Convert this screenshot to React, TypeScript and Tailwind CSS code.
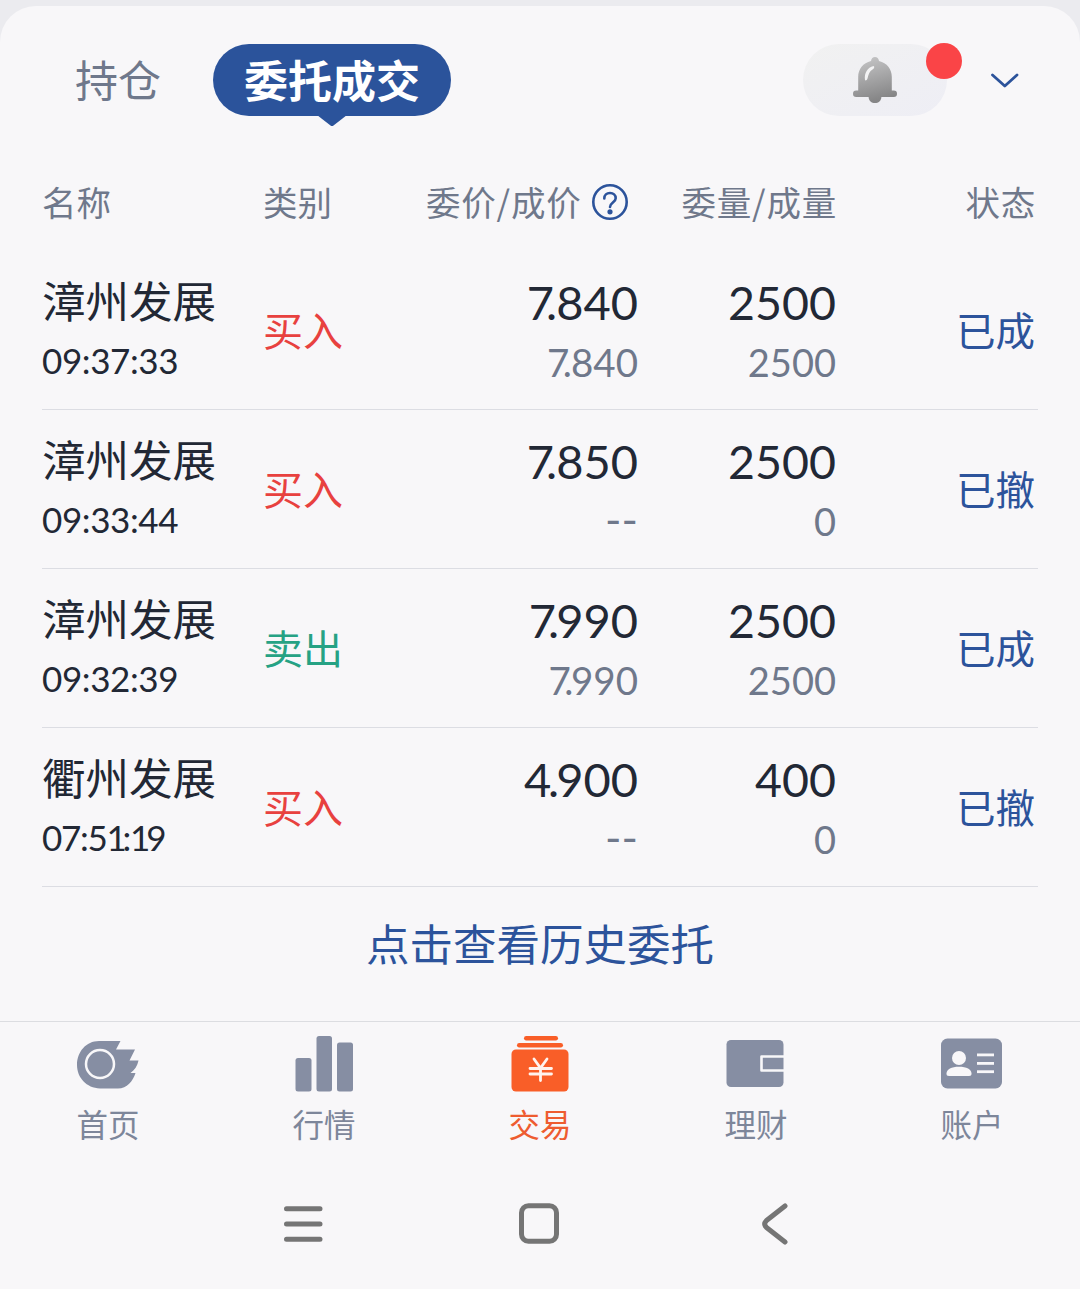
import React from 'react';

type Order = {
  name: string;
  time: string;
  side: '买入' | '卖出';
  price: string;
  dealPrice: string;
  qty: string;
  dealQty: string;
  status: string;
};

const orders: Order[] = [
  { name: '漳州发展', time: '09:37:33', side: '买入', price: '7.840', dealPrice: '7.840', qty: '2500', dealQty: '2500', status: '已成' },
  { name: '漳州发展', time: '09:33:44', side: '买入', price: '7.850', dealPrice: '--', qty: '2500', dealQty: '0', status: '已撤' },
  { name: '漳州发展', time: '09:32:39', side: '卖出', price: '7.990', dealPrice: '7.990', qty: '2500', dealQty: '2500', status: '已成' },
  { name: '衢州发展', time: '07:51:19', side: '买入', price: '4.900', dealPrice: '--', qty: '400', dealQty: '0', status: '已撤' },
];

// Decimal number with the point kerned against its neighbours.
function Price({ value }: { value: string }) {
  if (!value.includes('.')) {
    return <span className="text-[1.15em] leading-none">{value}</span>;
  }
  const [whole, frac] = value.split('.');
  const before = whole.endsWith('7') ? 'tracking-[-0.17em]' : 'tracking-[-0.07em]';
  const after = frac.startsWith('9') ? 'tracking-[-0.06em]' : 'tracking-[-0.02em]';
  return (
    <>
      <span className={before}>{whole}</span>
      <span className={after}>.</span>
      {frac}
    </>
  );
}

// Clock time with the ones set narrower than the other digits.
function Time({ value }: { value: string }) {
  return (
    <>
      {value.split(/(1)/).map((part, i) => (
        <span key={i} className={part === '1' ? 'tracking-[-0.12em]' : value.includes('1') ? 'tracking-[-1.3px]' : 'tracking-[-0.4px]'}>
          {part}
        </span>
      ))}
    </>
  );
}

function BellIcon() {
  return (
    <svg width="44" height="48" viewBox="0 0 44 48">
      <defs>
        <linearGradient id="bell" x1="0" y1="0" x2="0.25" y2="1">
          <stop offset="0" stopColor="#c9c9ca" />
          <stop offset="1" stopColor="#868687" />
        </linearGradient>
      </defs>
      <path
        d="M22 1c2.200 0 3.600 1.600 4 4C34 7 38.800 13 38.800 21v13.500h2a3.200 3.200 0 0 1 0 6.400H28.400C28.200 44.800 25.500 47 22 47s-6.200-2.200-6.400-6.100H3.200a3.200 3.200 0 0 1 0-6.400h2V21C5.200 13 10 7 18 5c.4-2.400 1.800-4 4-4Z"
        fill="url(#bell)"
      />
      <path d="M12 24c-1-7 2.500-12.500 8.500-14 1.500 1 .5 2.500-1 3.500-3 2-4 4.500-5 9-.4 1.800-2.200 2.500-2.500 1.500Z" fill="#f3f3f4" />
    </svg>
  );
}

function HomeIcon() {
  return (
    <svg width="62" height="56" viewBox="0 0 62 56">
      <path
        d="M22 5H43.500L39 13.500H58L52.500 24.500H61.500C60.500 30 57.500 34 53.500 37H58.500C56 45 50 52.500 41 52.500H23C9.500 52 0 41.500 0 29 0 16 9 5 22 5Z"
        fill="#868ea3"
      />
      <circle cx="23" cy="28" r="14" fill="none" stroke="#f8f7f9" strokeWidth="2.500" />
    </svg>
  );
}

function MarketIcon() {
  return (
    <svg width="62" height="56" viewBox="0 0 62 56" fill="#868ea3">
      <rect x="2.500" y="22" width="16" height="33.500" rx="2.500" />
      <rect x="23.500" y="0" width="15.500" height="55.500" rx="2.500" />
      <rect x="44" y="6.500" width="16" height="49" rx="2.500" />
    </svg>
  );
}

function TradeIcon() {
  return (
    <svg width="62" height="56" viewBox="0 0 62 56">
      <g fill="#f95e28">
        <rect x="15" y="0" width="34" height="4.500" rx="2.200" />
        <rect x="8" y="7" width="46" height="4.500" rx="2.200" />
        <rect x="2.500" y="13.500" width="57" height="42" rx="4.500" />
      </g>
      <path d="M25 23l6.500 9 6.500-9M21 32.500h21.500M21 38h21.500M31.500 32V44.500" fill="none" stroke="#fff3ee" strokeWidth="2.800" strokeLinecap="round" />
    </svg>
  );
}

function WalletIcon() {
  return (
    <svg width="62" height="56" viewBox="0 0 62 56">
      <rect x="1.500" y="4" width="57" height="47" rx="4.500" fill="#868ea3" />
      <path d="M59 20.500H36.500V34.500H59" fill="none" stroke="#f8f7f9" strokeWidth="2.600" strokeLinejoin="round" />
    </svg>
  );
}

function AccountIcon() {
  return (
    <svg width="62" height="56" viewBox="0 0 62 56">
      <rect x="0" y="2.500" width="61" height="50" rx="6.500" fill="#868ea3" />
      <g fill="#f8f7f9">
        <circle cx="18" cy="22" r="7" />
        <path d="M5.500 37.500C5.500 33.500 10.500 30.800 18 30.800S30.500 33.500 30.500 37.500C30.500 39.300 29.800 40 28 40H8C6.200 40 5.500 39.300 5.500 37.500Z" />
        <rect x="36" y="17.500" width="17" height="2.800" />
        <rect x="36" y="26" width="17" height="2.800" />
        <rect x="36" y="34.300" width="17" height="2.800" />
      </g>
    </svg>
  );
}

const tabs = [
  { label: '首页', Icon: HomeIcon, active: false },
  { label: '行情', Icon: MarketIcon, active: false },
  { label: '交易', Icon: TradeIcon, active: true },
  { label: '理财', Icon: WalletIcon, active: false },
  { label: '账户', Icon: AccountIcon, active: false },
];

function OrderRow({ o }: { o: Order }) {
  return (
    <div className="flex h-[159px] border-b border-[#dcdde3]">
      <div className="w-[221px] pt-[24px]">
        <div className="text-[43.5px] leading-[50px] text-[#222835]">{o.name}</div>
        <div className="mt-[10px] font-[Lato] text-[35px] leading-[50px] text-[#222835]">
          <Time value={o.time} />
        </div>
      </div>
      <div className={`w-[120px] pt-[53px] text-[40px] leading-[50px] ${o.side === '买入' ? 'text-[#e8413f]' : 'text-[#26a284]'}`}>{o.side}</div>
      <div className="w-[255px] pt-[26px] text-right font-[Lato]">
        <div className="h-[50px] text-[47px] leading-[50px] text-[#222835]">
          <Price value={o.price} />
        </div>
        <div className="mt-[10px] h-[50px] text-[38.5px] leading-[50px] text-[#6f788b]">
          <Price value={o.dealPrice} />
        </div>
      </div>
      <div className="w-[198px] pt-[26px] text-right font-[Lato]">
        <div className="text-[46.5px] leading-[50px] text-[#222835]">{o.qty}</div>
        <div className="mt-[10px] text-[38px] leading-[50px] text-[#6f788b]">{o.dealQty}</div>
      </div>
      <div className="flex-1 pt-[53px] pr-[3px] text-right text-[39.5px] leading-[50px] text-[#2c539b]">{o.status}</div>
    </div>
  );
}

export default function App() {
  return (
    <div className="h-[1289px] w-[1080px] overflow-hidden bg-[#ebebef] pt-[6px] font-['Noto_Sans_CJK_SC',sans-serif] whitespace-nowrap">
      <div className="flex h-[1283px] flex-col rounded-t-[36px] bg-[#f8f7f9]">
        <header className="flex h-[144px] items-start pt-[38px]">
          <div className="ml-[75px] w-[138px] text-[43px] leading-[69px] text-[#6f788b]">持仓</div>
          <div className="relative h-[72px] w-[238px] rounded-full bg-[#2b539b] text-center text-[44px] leading-[70px] font-bold text-white">
            委托成交
            <svg className="absolute top-[71px] left-[104px]" width="30" height="12" viewBox="0 0 30 12">
              <path d="M0 0H30L16.500 10.500Q15 11.500 13.500 10.500Z" fill="#2b539b" />
            </svg>
          </div>
          <div className="relative ml-[352px] flex h-[72px] w-[144px] items-center justify-center rounded-full bg-gradient-to-br from-[#f1f1f1] to-[#eeeef5]">
            <BellIcon />
            <span className="absolute top-[-1px] right-[-15px] size-[36px] rounded-full bg-[#fa4447]" />
          </div>
          <svg className="mt-[28px] ml-[43px]" width="30" height="18" viewBox="0 0 30 18">
            <path d="M2.500 3L14.800 14 27 3" fill="none" stroke="#2c539b" strokeWidth="2.800" strokeLinecap="round" strokeLinejoin="round" />
          </svg>
        </header>

        <main className="px-[42px]">
          <div className="flex h-[101px] pt-[26px] text-[34.5px] leading-[50px] text-[#6f788b]">
            <div className="w-[221px]">名称</div>
            <div className="w-[163px]">类别</div>
            <div className="flex h-[50px] w-[204px] items-center tracking-[0.8px]">
              委价/成价
              <svg className="mt-[2px] ml-[9px]" width="38" height="38" viewBox="0 0 38 38" fill="none" stroke="#2c539b" strokeWidth="2.600" strokeLinecap="round">
                <circle cx="19" cy="19" r="16.700" />
                <path d="M13.300 15.500c0-3.300 2.400-5.500 5.700-5.500s5.700 2.100 5.700 5.200c0 4.200-5.700 4.500-5.700 8.800" />
                <circle cx="19" cy="28.800" r="1.300" fill="#2c539b" />
              </svg>
            </div>
            <div className="w-[207px] text-right tracking-[0.8px]">委量/成量</div>
            <div className="flex-1 pr-[2px] text-right tracking-[0.8px]">状态</div>
          </div>
          {orders.map((o) => (
            <OrderRow key={o.time} o={o} />
          ))}
          <div className="h-[134px] pt-[31px] text-center text-[43.5px] leading-[50px] text-[#2c539b]">点击查看历史委托</div>
        </main>

        <nav className="grid h-[142px] grid-cols-5 border-t border-[#dcdde1] pt-[14px]">
          {tabs.map(({ label, Icon, active }) => (
            <div key={label} className={`flex flex-col items-center text-[31.5px] leading-[40px] ${active ? 'text-[#ee5c30]' : 'text-[#7d869a]'}`}>
              <Icon />
              <span className="mt-[11px]">{label}</span>
            </div>
          ))}
        </nav>

        <footer className="flex h-[119px] items-center justify-center pt-[2px]">
          <svg width="512" height="46" viewBox="0 0 512 46" fill="none" stroke="#757575" strokeWidth="5" strokeLinecap="round" strokeLinejoin="round">
            <path d="M2.500 7.700H36M2.500 23H36M2.500 38.300H36" />
            <rect x="237.500" y="4.700" width="35" height="35.600" rx="7" />
            <path d="M501 5L482.500 19.500Q479 23 482.500 26.500L501 41" />
          </svg>
        </footer>
      </div>
    </div>
  );
}
